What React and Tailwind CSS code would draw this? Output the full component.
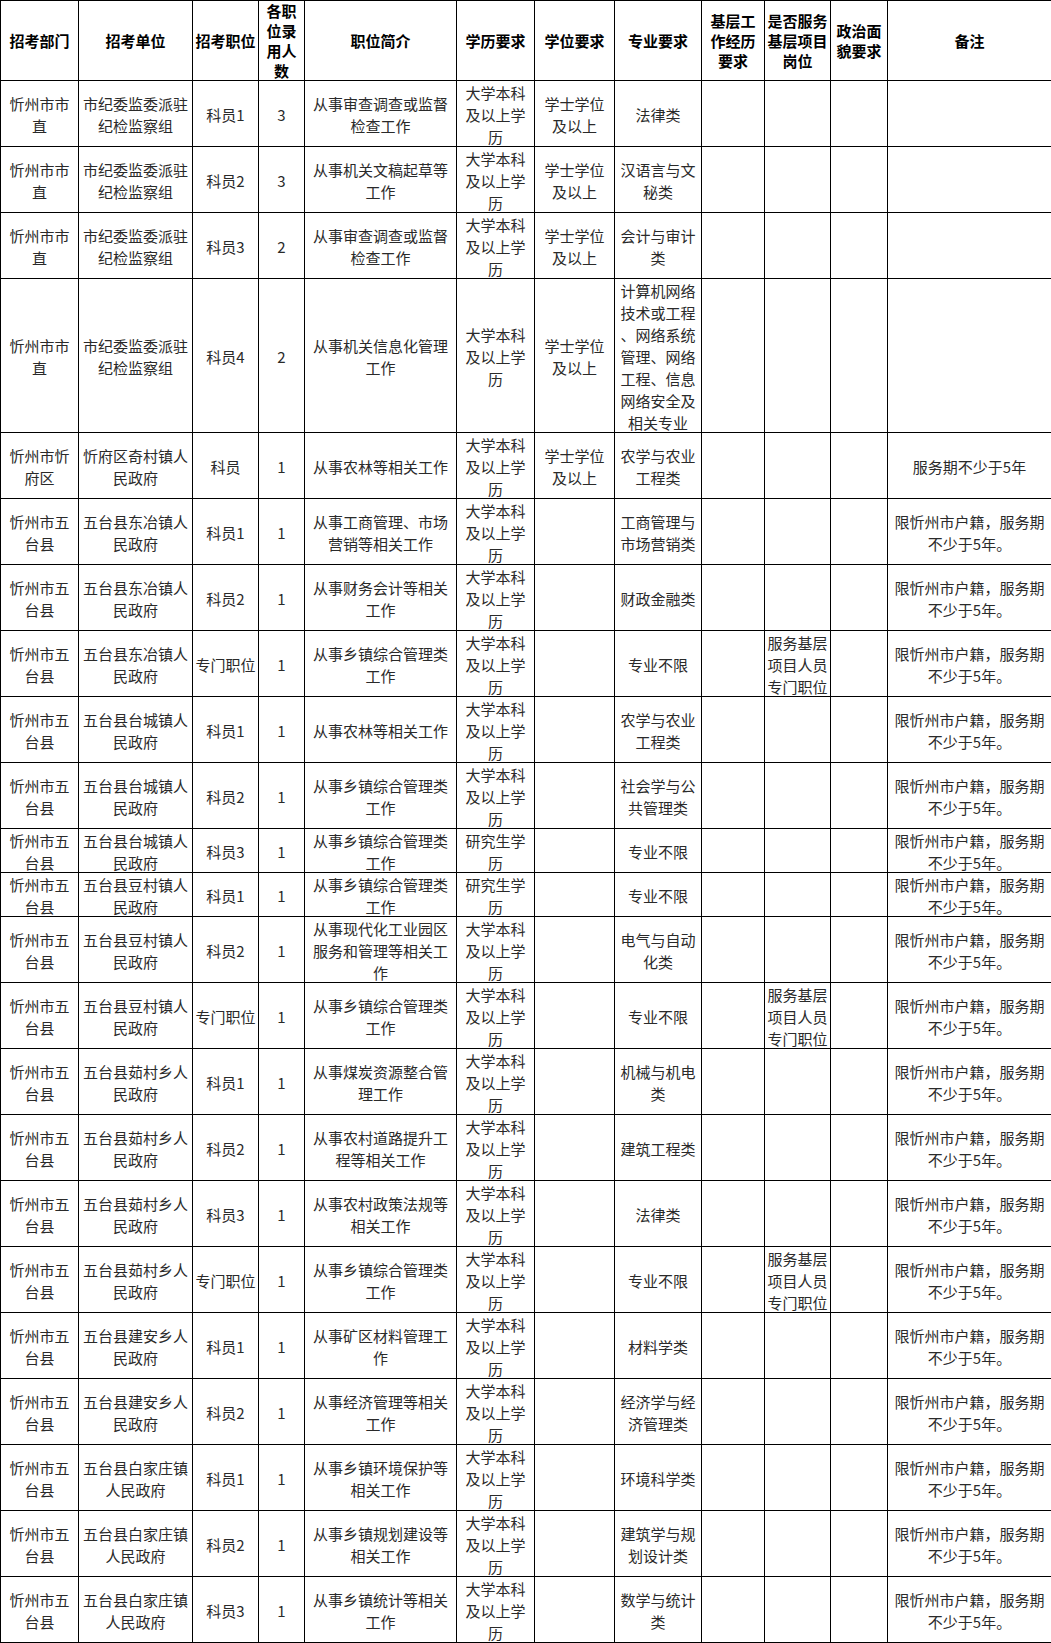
const EDU = '大学本科\n及以上学\n历'
const GRAD = '研究生学\n历'
const BA = '学士学位\n及以上'
const NOTE = '限忻州市户籍，服务期\n不少于5年。'
const SVC = '服务基层\n项目人员\n专门职位'
const WT = '忻州市五\n台县'
const SZ = '忻州市市\n直'
const JW = '市纪委监委派驻\n纪检监察组'

const HEAD = [
  '招考部门', '招考单位', '招考职位', '各职\n位录\n用人\n数', '职位简介', '学历要求',
  '学位要求', '专业要求', '基层工\n作经历\n要求', '是否服务\n基层项目\n岗位', '政治面\n貌要求', '备注',
]

// h: inner height of each cell (row pitch minus the 1px rule)
const ROWS = [
  { h: 'h-[65px]', c: [SZ, JW, '科员1', '3', '从事审查调查或监督\n检查工作', EDU, BA, '法律类', '', '', '', ''] },
  { h: 'h-[65px]', c: [SZ, JW, '科员2', '3', '从事机关文稿起草等\n工作', EDU, BA, '汉语言与文\n秘类', '', '', '', ''] },
  { h: 'h-[65px]', c: [SZ, JW, '科员3', '2', '从事审查调查或监督\n检查工作', EDU, BA, '会计与审计\n类', '', '', '', ''] },
  { h: 'h-[153px] leading-[21.5px]', c: [SZ, JW, '科员4', '2', '从事机关信息化管理\n工作', EDU, BA, '计算机网络\n技术或工程\n、网络系统\n管理、网络\n工程、信息\n网络安全及\n相关专业', '', '', '', ''] },
  { h: 'h-[65px]', c: ['忻州市忻\n府区', '忻府区奇村镇人\n民政府', '科员', '1', '从事农林等相关工作', EDU, BA, '农学与农业\n工程类', '', '', '', '服务期不少于5年'] },
  { h: 'h-[65px]', c: [WT, '五台县东冶镇人\n民政府', '科员1', '1', '从事工商管理、市场\n营销等相关工作', EDU, '', '工商管理与\n市场营销类', '', '', '', NOTE] },
  { h: 'h-[65px]', c: [WT, '五台县东冶镇人\n民政府', '科员2', '1', '从事财务会计等相关\n工作', EDU, '', '财政金融类', '', '', '', NOTE] },
  { h: 'h-[65px]', c: [WT, '五台县东冶镇人\n民政府', '专门职位', '1', '从事乡镇综合管理类\n工作', EDU, '', '专业不限', '', SVC, '', NOTE] },
  { h: 'h-[65px]', c: [WT, '五台县台城镇人\n民政府', '科员1', '1', '从事农林等相关工作', EDU, '', '农学与农业\n工程类', '', '', '', NOTE] },
  { h: 'h-[65px]', c: [WT, '五台县台城镇人\n民政府', '科员2', '1', '从事乡镇综合管理类\n工作', EDU, '', '社会学与公\n共管理类', '', '', '', NOTE] },
  { h: 'h-[43px]', c: [WT, '五台县台城镇人\n民政府', '科员3', '1', '从事乡镇综合管理类\n工作', GRAD, '', '专业不限', '', '', '', NOTE] },
  { h: 'h-[43px]', c: [WT, '五台县豆村镇人\n民政府', '科员1', '1', '从事乡镇综合管理类\n工作', GRAD, '', '专业不限', '', '', '', NOTE] },
  { h: 'h-[65px]', c: [WT, '五台县豆村镇人\n民政府', '科员2', '1', '从事现代化工业园区\n服务和管理等相关工\n作', EDU, '', '电气与自动\n化类', '', '', '', NOTE] },
  { h: 'h-[65px]', c: [WT, '五台县豆村镇人\n民政府', '专门职位', '1', '从事乡镇综合管理类\n工作', EDU, '', '专业不限', '', SVC, '', NOTE] },
  { h: 'h-[65px]', c: [WT, '五台县茹村乡人\n民政府', '科员1', '1', '从事煤炭资源整合管\n理工作', EDU, '', '机械与机电\n类', '', '', '', NOTE] },
  { h: 'h-[65px]', c: [WT, '五台县茹村乡人\n民政府', '科员2', '1', '从事农村道路提升工\n程等相关工作', EDU, '', '建筑工程类', '', '', '', NOTE] },
  { h: 'h-[65px]', c: [WT, '五台县茹村乡人\n民政府', '科员3', '1', '从事农村政策法规等\n相关工作', EDU, '', '法律类', '', '', '', NOTE] },
  { h: 'h-[65px]', c: [WT, '五台县茹村乡人\n民政府', '专门职位', '1', '从事乡镇综合管理类\n工作', EDU, '', '专业不限', '', SVC, '', NOTE] },
  { h: 'h-[65px]', c: [WT, '五台县建安乡人\n民政府', '科员1', '1', '从事矿区材料管理工\n作', EDU, '', '材料学类', '', '', '', NOTE] },
  { h: 'h-[65px]', c: [WT, '五台县建安乡人\n民政府', '科员2', '1', '从事经济管理等相关\n工作', EDU, '', '经济学与经\n济管理类', '', '', '', NOTE] },
  { h: 'h-[65px]', c: [WT, '五台县白家庄镇\n人民政府', '科员1', '1', '从事乡镇环境保护等\n相关工作', EDU, '', '环境科学类', '', '', '', NOTE] },
  { h: 'h-[65px]', c: [WT, '五台县白家庄镇\n人民政府', '科员2', '1', '从事乡镇规划建设等\n相关工作', EDU, '', '建筑学与规\n划设计类', '', '', '', NOTE] },
  { h: 'h-[65px]', c: [WT, '五台县白家庄镇\n人民政府', '科员3', '1', '从事乡镇统计等相关\n工作', EDU, '', '数学与统计\n类', '', '', '', NOTE] },
]

const WIDTHS = ['w-[78px]', 'w-[114px]', 'w-[66px]', 'w-[46px]', 'w-[152px]', 'w-[78px]', 'w-[80px]', 'w-[87px]', 'w-[63px]', 'w-[66px]', 'w-[57px]', 'w-[164px]']

export default function App() {
  return (
    <div className="bg-white font-['Noto_Sans_CJK_SC','Microsoft_YaHei',sans-serif] text-[15px]">
      <table className="w-[1051px] table-fixed border-collapse">
        <colgroup>
          {WIDTHS.map((w, i) => <col key={i} className={w} />)}
        </colgroup>
        <thead>
          <tr>
            {HEAD.map((t, i) => (
              <th key={i} className="border border-black p-0 align-middle">
                <div className="h-[79px] flex items-center justify-center overflow-hidden whitespace-pre text-center leading-[20px] font-bold text-black">
                  {t}
                </div>
              </th>
            ))}
          </tr>
        </thead>
        <tbody>
          {ROWS.map((r, ri) => (
            <tr key={ri}>
              {r.c.map((t, ci) => (
                <td key={ci} className="border border-black p-0 align-middle">
                  <div className={`leading-[22px] ${r.h} flex items-center justify-center overflow-hidden whitespace-pre text-center pt-[2px] text-[#2a2a2a]`}>
                    {t}
                  </div>
                </td>
              ))}
            </tr>
          ))}
        </tbody>
      </table>
    </div>
  )
}
